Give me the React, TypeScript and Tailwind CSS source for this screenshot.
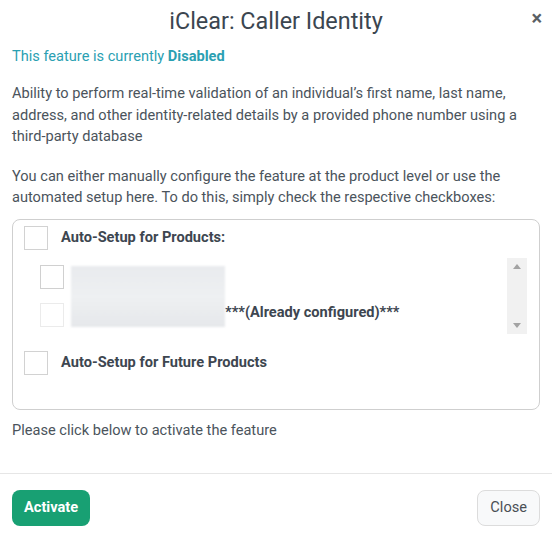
export default function App() {
  return (
    <div className="w-[552px] h-[535px] bg-white font-['Roboto',sans-serif] text-[#4b545c] text-[14.6px] flex flex-col">
      <div className="relative h-[42px] flex items-center justify-center pt-[1px]">
        <h2 className="text-[23.4px] text-[#3b4650]">iClear: Caller Identity</h2>
        <button className="absolute right-[10px] top-[8px] text-[#5a5f64] text-[20px] font-bold leading-none">×</button>
      </div>
      <div className="px-3 flex flex-col">
        <p className="text-[#2aa0b2] mt-[4px] leading-[21px]">
          This feature is currently <span className="font-bold">Disabled</span>
        </p>
        <p className="mt-[16px] leading-[21.5px]">
          Ability to perform real-time validation of an individual’s first name, last name, address, and other identity-related details by a provided phone number using a third-party database
        </p>
        <p className="mt-[18px] leading-[21.5px]">
          You can either manually configure the feature at the product level or use the automated setup here. To do this, simply check the respective checkboxes:
        </p>
        <div className="mt-[10px] h-[191px] border border-[#cfcfcf] rounded-lg px-[11px] pt-[6px] flex flex-col">
          <div className="flex items-center gap-[13px]">
            <span className="w-6 h-6 border border-[#d2d2d2] bg-white" />
            <span className="font-bold text-[#3d4650]">Auto-Setup for Products:</span>
          </div>
          <div className="mt-[8px] ml-[16px] mr-[1px] flex">
            <div className="flex-1 flex items-start">
              <div className="flex flex-col gap-[14px] pt-[7px]">
                <span className="w-6 h-6 border border-[#d0d0d0] bg-white" />
                <span className="w-6 h-6 border border-[#ebebeb] bg-white" />
              </div>
              <div className="ml-[7px] mt-[8px] w-[154px] h-[61px] bg-gradient-to-b from-[#e9ebee] via-[#eef0f2] to-[#e6e8eb] blur-[1px]" />
              <span className="mt-[47px] font-bold text-[#3d4650] leading-[15px]">***(Already configured)***</span>
            </div>
            <div className="w-[20px] h-[76px] bg-[#f1f1f1] flex flex-col items-center justify-between py-[6px]">
              <span className="w-0 h-0 border-l-[4px] border-r-[4px] border-b-[5px] border-l-transparent border-r-transparent border-b-[#a3a3a3]" />
              <span className="w-0 h-0 border-l-[4px] border-r-[4px] border-t-[5px] border-l-transparent border-r-transparent border-t-[#a3a3a3]" />
            </div>
          </div>
          <div className="flex items-center gap-[13px] mt-[17px]">
            <span className="w-6 h-6 border border-[#d2d2d2] bg-white" />
            <span className="font-bold text-[#3d4650]">Auto-Setup for Future Products</span>
          </div>
        </div>
        <p className="mt-[10px] leading-[21px]">Please click below to activate the feature</p>
      </div>
      <div className="mt-[32px] border-t border-[#e6e6e6] px-3 pt-[16px] flex justify-between">
        <button className="h-[36px] px-[12px] rounded-lg bg-[#18a073] text-white font-bold">Activate</button>
        <button className="h-[36px] px-[12px] rounded-lg bg-[#f8f9fa] border border-[#dcdcdc] text-[#4a4f55]">Close</button>
      </div>
    </div>
  );
}
